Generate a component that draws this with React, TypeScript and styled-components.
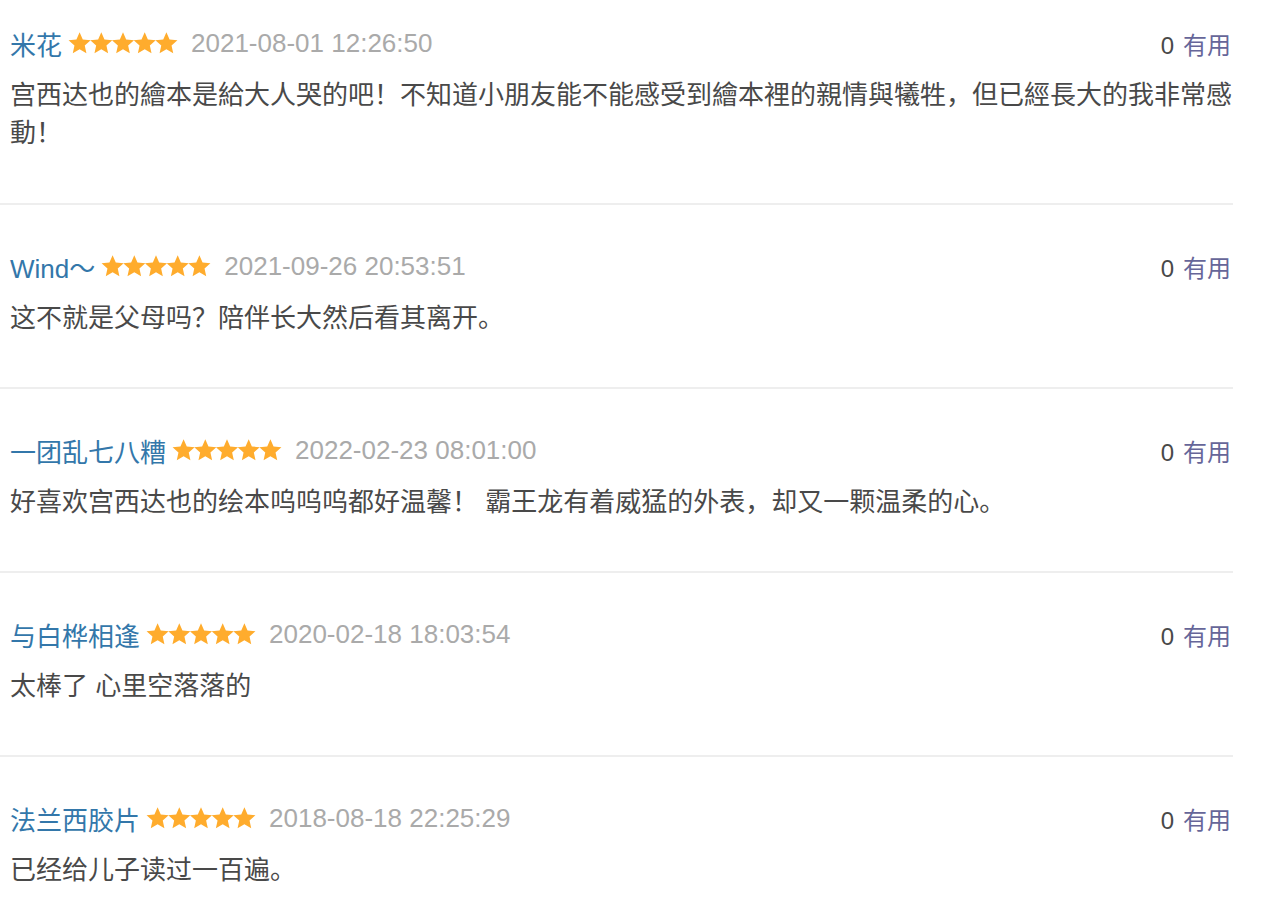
import React from "react";
import styled, { createGlobalStyle } from "styled-components";

const Global = createGlobalStyle`
  html, body { margin: 0; padding: 0; background: #fff; }
  body { font-family: "Helvetica Neue", "Liberation Sans", Arial, "Noto Sans CJK SC", sans-serif; }
`;

const List = styled.div`
  width: 1233px;
  padding-top: 25px;
`;

const Item = styled.div<{ $first?: boolean; $last?: boolean }>`
  padding: ${(p) => (p.$first ? "0" : "43px")} 0 ${(p) => (p.$first ? "51px" : "50px")} 10px;
  border-bottom: ${(p) => (p.$last ? "none" : "2px solid #eeeeee")};
`;

const Header = styled.div`
  display: flex;
  align-items: center;
  height: 36px;
  padding-right: 2px;
`;

const Name = styled.span`
  font-size: 26px;
  color: #3377aa;
  margin-right: 6px;
  white-space: nowrap;
`;

const Stars = styled.svg`
  flex: none;
  margin-right: 13px;
`;

const Time = styled.span`
  font-size: 26px;
  color: #aaaaaa;
  white-space: nowrap;
`;

const Votes = styled.span`
  margin-left: auto;
  font-size: 24px;
  color: #494949;
  white-space: nowrap;
`;

const Useful = styled.span`
  color: #666699;
  margin-left: 9px;
`;

const Body = styled.p`
  margin: 15px 0 0;
  font-size: 26px;
  line-height: 38px;
  color: #494949;
`;

const starPath = (cx: number) => {
  const pts: string[] = [];
  const cy = 11.8;
  for (let i = 0; i < 10; i++) {
    const r = i % 2 === 0 ? 11.6 : 5.4;
    const a = -Math.PI / 2 + (i * Math.PI) / 5;
    pts.push(`${(cx + r * Math.cos(a)).toFixed(2)},${(cy + r * Math.sin(a)).toFixed(2)}`);
  }
  return pts.join(" ");
};

const StarRow = () => (
  <Stars width="110" height="22" viewBox="0 0 110 22">
    {[0, 1, 2, 3, 4].map((i) => (
      <polygon key={i} points={starPath(11.6 + i * 21.7)} fill="#ffac2d" />
    ))}
  </Stars>
);

const data = [
  {
    name: "米花",
    time: "2021-08-01 12:26:50",
    text: "宫西达也的繪本是給大人哭的吧！不知道小朋友能不能感受到繪本裡的親情與犧牲，但已經長大的我非常感動！",
  },
  { name: "Wind～", time: "2021-09-26 20:53:51", text: "这不就是父母吗？陪伴长大然后看其离开。" },
  {
    name: "一团乱七八糟",
    time: "2022-02-23 08:01:00",
    text: "好喜欢宫西达也的绘本呜呜呜都好温馨！ 霸王龙有着威猛的外表，却又一颗温柔的心。",
  },
  { name: "与白桦相逢", time: "2020-02-18 18:03:54", text: "太棒了 心里空落落的" },
  { name: "法兰西胶片", time: "2018-08-18 22:25:29", text: "已经给儿子读过一百遍。" },
];

export default function App() {
  return (
    <>
      <Global />
      <List>
        {data.map((d, i) => (
          <Item key={i} $first={i === 0} $last={i === data.length - 1}>
            <Header>
              <Name>{d.name}</Name>
              <StarRow />
              <Time>{d.time}</Time>
              <Votes>
                0<Useful>有用</Useful>
              </Votes>
            </Header>
            <Body>{d.text}</Body>
          </Item>
        ))}
      </List>
    </>
  );
}
